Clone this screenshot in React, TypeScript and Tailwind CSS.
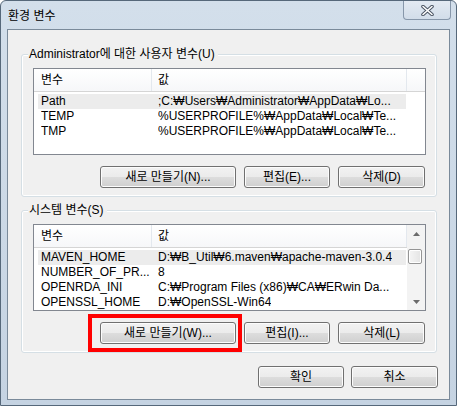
import type { ReactNode } from "react";

type Row = { name: string; value: string; sel?: boolean };

const userRows: Row[] = [
  { name: "Path", value: ";C:₩Users₩Administrator₩AppData₩Lo...", sel: true },
  { name: "TEMP", value: "%USERPROFILE%₩AppData₩Local₩Te..." },
  { name: "TMP", value: "%USERPROFILE%₩AppData₩Local₩Te..." },
];

const systemRows: Row[] = [
  { name: "MAVEN_HOME", value: "D:₩B_Util₩6.maven₩apache-maven-3.0.4", sel: true },
  { name: "NUMBER_OF_PR...", value: "8" },
  { name: "OPENRDA_INI", value: "C:₩Program Files (x86)₩CA₩ERwin Da..." },
  { name: "OPENSSL_HOME", value: "D:₩OpenSSL-Win64" },
];

function WinButton({ label, w }: { label: string; w: string }) {
  return (
    <button
      className={`${w} h-[22px] rounded-[3px] border border-[#707070] bg-[linear-gradient(to_bottom,#f2f2f2_0%,#ebebeb_50%,#dddddd_50%,#cfcfcf_100%)] text-[12px] leading-none text-black shadow-[inset_0_0_0_1px_#fcfcfc]`}
    >
      {label}
    </button>
  );
}

function Header({ filler }: { filler: boolean }) {
  return (
    <div className="flex h-[23px] border-b border-[#d5d5d5] bg-[linear-gradient(to_bottom,#ffffff,#f6f7f9)]">
      <div className="flex w-[118px] items-center border-r border-[#e3e8ee] pl-[7px]">변수</div>
      <div className="flex w-[255px] items-center border-r border-[#e3e8ee] pl-[6px]">값</div>
      {filler && <div className="flex-1" />}
    </div>
  );
}

function Rows({ rows }: { rows: Row[] }) {
  return (
    <div className="mt-[2px]">
      {rows.map((r) => (
        <div
          key={r.name}
          className={`ml-[4px] flex h-[15px] w-[368px] items-center whitespace-nowrap pl-[3px] leading-[15px] ${
            r.sel ? "bg-[#ececec]" : ""
          }`}
        >
          <span className="w-[117px] overflow-hidden">{r.name}</span>
          <span className="overflow-hidden">{r.value}</span>
        </div>
      ))}
    </div>
  );
}

function Arrow({ down }: { down?: boolean }) {
  return (
    <div className="flex h-[17px] items-center justify-center">
      <svg width="7" height="4" viewBox="0 0 7 4">
        <path d={down ? "M0 0L7 0L3.5 4Z" : "M0 4L3.5 0L7 4Z"} fill="#6b6b6b" />
      </svg>
    </div>
  );
}

function Group({ title, children }: { title: string; children: ReactNode }) {
  return (
    <fieldset className="ml-[13px] w-[416px] rounded-[3px] border border-[#d5dfe5] shadow-[inset_0_0_0_1px_#ffffff]">
      <legend className="ml-[6px] bg-[#f0f0f0] pl-[1px] pr-[3px] text-[12px] leading-[14px]">{title}</legend>
      {children}
    </fieldset>
  );
}

export default function App() {
  return (
    <div className="h-[406px] w-[457px] rounded-t-[6px] border border-[#56687a] bg-[linear-gradient(to_bottom,#d3dfeb,#c5d3e2)] font-['Liberation_Sans','DejaVu_Sans','Noto_Sans_CJK_KR',sans-serif] text-[12px] text-black">
      <div className="flex h-[28px]">
        <div className="self-center pl-[7px] pt-[1px] text-[12px]">환경 변수</div>
        <div className="ml-auto mr-[5px] flex h-[19px] w-[48px] items-center justify-center rounded-b-[4px] border border-t-0 border-[#8797aa] bg-[linear-gradient(to_bottom,#e3eaf2,#d2dde9)]">
          <svg width="13" height="11" viewBox="0 0 13 11">
            <path d="M2 1.5L11 9.5M11 1.5L2 9.5" stroke="#4a5462" strokeWidth="3.6" strokeLinecap="round" />
            <path d="M2 1.5L11 9.5M11 1.5L2 9.5" stroke="#ffffff" strokeWidth="1.6" strokeLinecap="round" />
          </svg>
        </div>
      </div>

      <div className="mx-[6px] flex h-[371px] flex-col border border-[#7a8a9a] bg-[#f0f0f0] pt-[17px]">
        <Group title="Administrator에 대한 사용자 변수(U)">
          <div className="ml-[11px] mt-[7px] h-[87px] w-[393px] overflow-hidden border border-[#828790] bg-white">
            <Header filler />
            <Rows rows={userRows} />
          </div>
          <div className="mt-[11px] flex justify-end gap-[8px] pb-[8px] pr-[11px]">
            <WinButton label="새로 만들기(N)..." w="w-[136px]" />
            <WinButton label="편집(E)..." w="w-[86px]" />
            <WinButton label="삭제(D)" w="w-[87px]" />
          </div>
        </Group>

        <div className="mt-[6px]">
          <Group title="시스템 변수(S)">
            <div className="ml-[11px] mt-[7px] flex h-[87px] w-[393px] overflow-hidden border border-[#828790] bg-white">
              <div className="w-[373px]">
                <Header filler={false} />
                <Rows rows={systemRows} />
              </div>
              <div className="flex flex-1 flex-col bg-[#f3f3f3]">
                <Arrow />
                <div className="flex-1 pl-[1px] pt-[7px]">
                  <div className="h-[15px] w-[14px] rounded-[2px] border border-[#959595] bg-[linear-gradient(to_right,#f5f5f5,#e4e4e4)] shadow-[inset_0_0_0_1px_#ffffff]" />
                </div>
                <Arrow down />
              </div>
            </div>
            <div className="mt-[11px] flex justify-end gap-[8px] pb-[8px] pr-[11px]">
              <div className="relative">
                <WinButton label="새로 만들기(W)..." w="w-[136px]" />
                <div className="absolute -bottom-[8px] -left-[12px] -right-[6px] -top-[8px] border-[4px] border-[#ff0000]" />
              </div>
              <WinButton label="편집(I)..." w="w-[86px]" />
              <WinButton label="삭제(L)" w="w-[87px]" />
            </div>
          </Group>
        </div>

        <div className="mt-[13px] flex justify-end gap-[7px] pr-[11px]">
          <WinButton label="확인" w="w-[86px]" />
          <WinButton label="취소" w="w-[87px]" />
        </div>
      </div>
    </div>
  );
}
